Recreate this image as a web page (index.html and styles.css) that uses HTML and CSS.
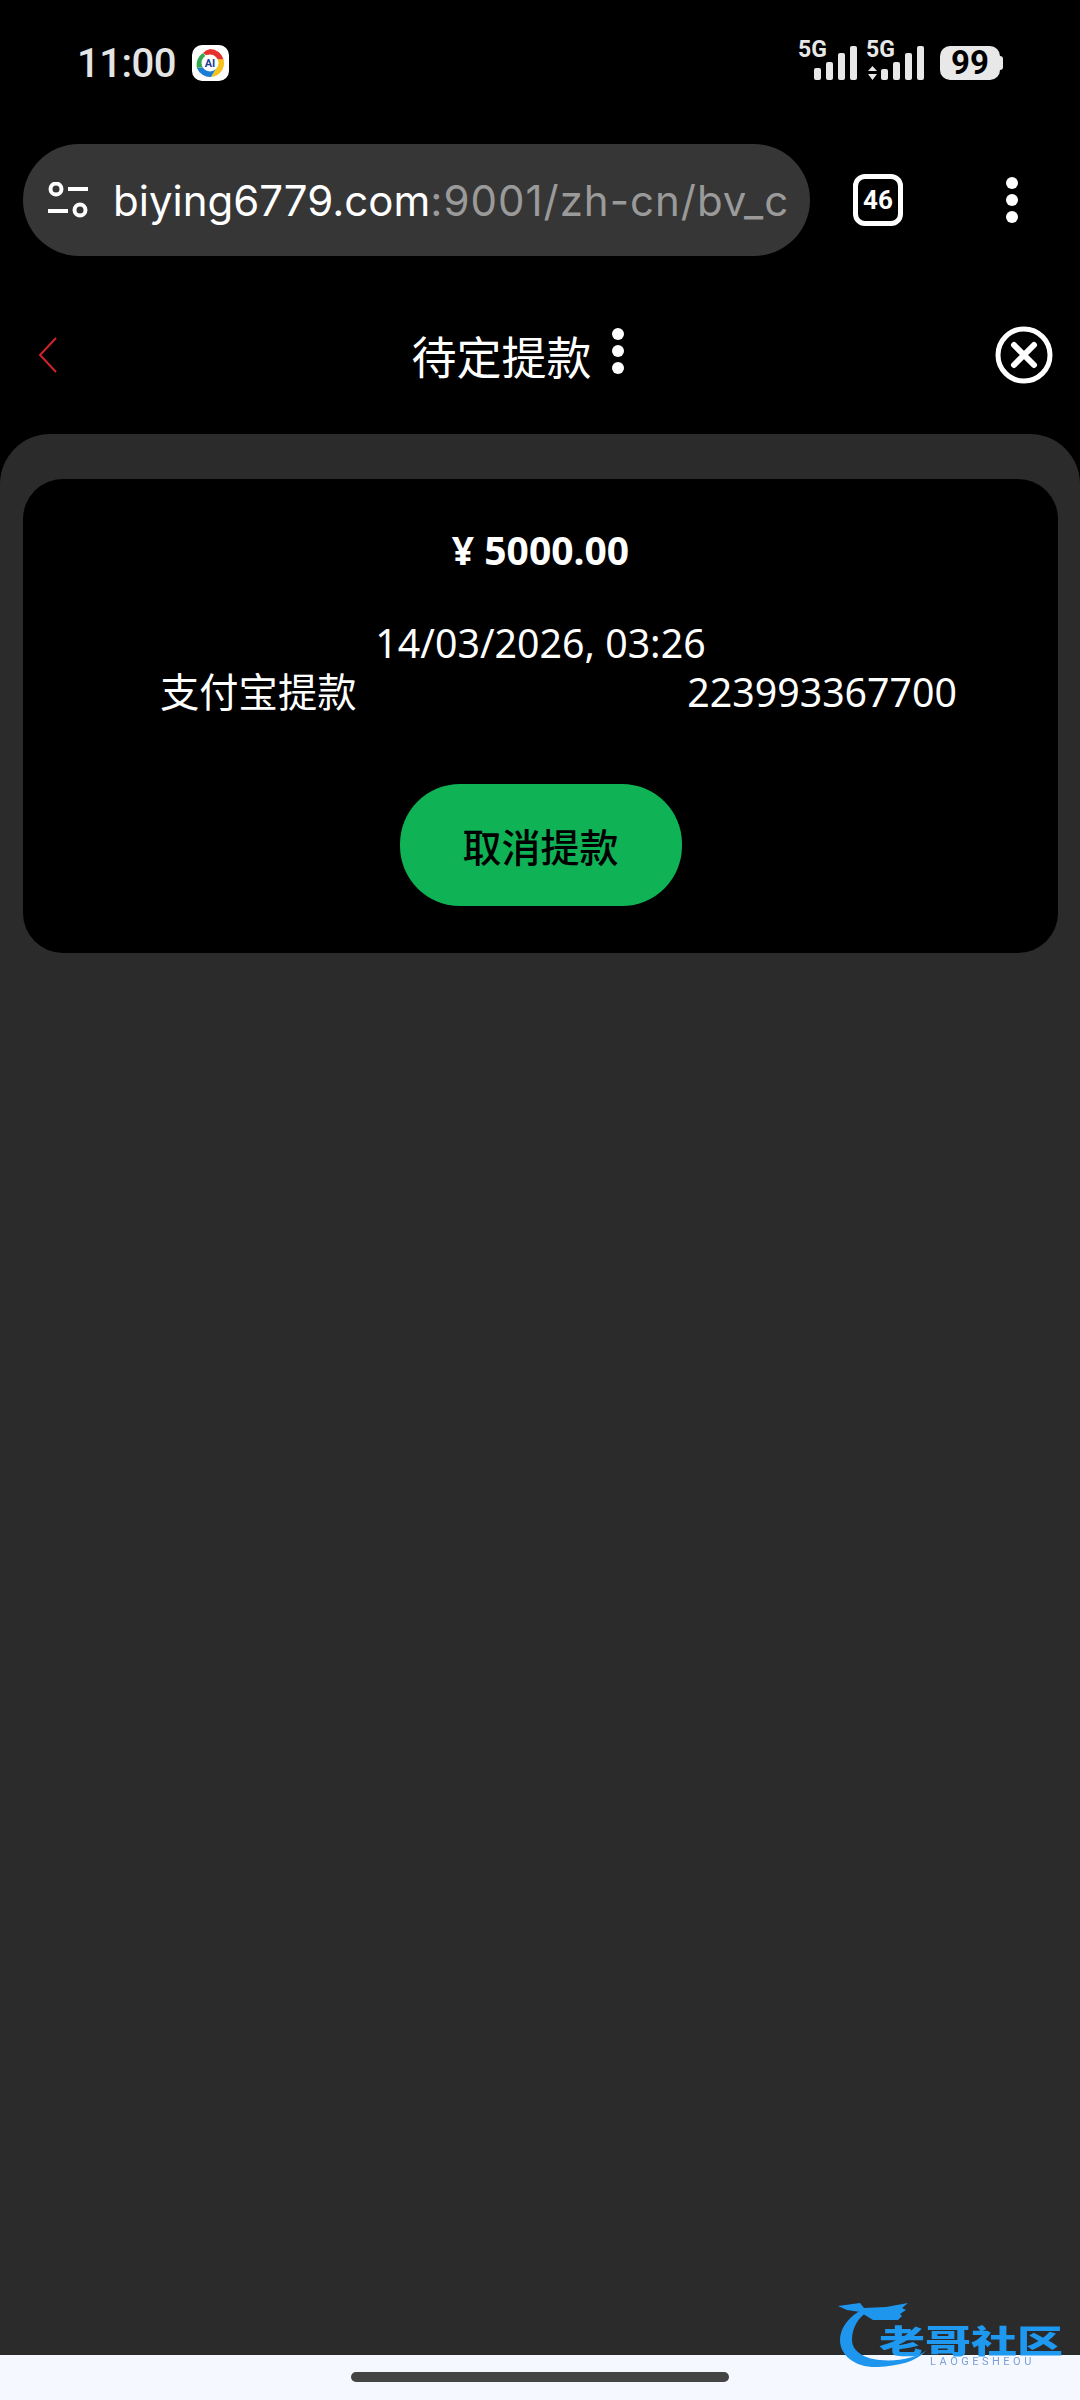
FILE: index.html
```html
<!DOCTYPE html>
<html lang="zh-CN">

<head>
    <meta charset="UTF-8">
    <meta name="viewport" content="width=device-width, initial-scale=1.0">
    <title>待定提款</title>
    <link rel="stylesheet" href="styles.css">
</head>

<body>
    <!-- Phone status bar -->
    <header class="status-bar">
        <div class="status-left">
            <span class="status-time">11:00</span>
            <span class="app-badge">
                <svg width="30" height="30" viewBox="0 0 30 30">
                    <path d="M15 1a14 14 0 0 1 13.6 10.6L18 12 8 5A14 14 0 0 1 15 1z" fill="#e5322d" />
                    <path d="M28.6 11.6A14 14 0 0 1 16 29l6-10-2-8z" fill="#f7c31c" />
                    <path d="M16 29A14 14 0 0 1 2 20l8-1a9 9 0 0 0 12 0z" fill="#1a7fd4" />
                    <path d="M2 20A14 14 0 0 1 8 5l4 5a8 8 0 0 0-4 9z" fill="#2faa4d" />
                    <circle cx="15" cy="15" r="8.5" fill="#fff" />
                    <text x="15" y="19" class="badge-text">AI</text>
                </svg>
            </span>
        </div>
        <div class="status-right">
            <svg class="signal" width="134" height="46" viewBox="0 -6 134 46">
                <text x="0" y="17" class="signal-text">5G</text>
                <rect x="16" y="28" width="7" height="12" rx="2" />
                <rect x="28" y="22" width="7" height="18" rx="2" />
                <rect x="40" y="13" width="7" height="27" rx="2" />
                <rect x="52" y="6" width="7" height="34" rx="2" />
                <text x="68" y="17" class="signal-text">5G</text>
                <path d="M74.500 26l4.500 5h-9zM74.500 40l4.500-6h-9z" />
                <rect x="83" y="29" width="7" height="11" rx="2" />
                <rect x="95" y="22" width="7" height="18" rx="2" />
                <rect x="107" y="13" width="7" height="27" rx="2" />
                <rect x="119" y="6" width="7" height="34" rx="2" />
            </svg>
            <span class="battery">99</span>
        </div>
    </header>

    <!-- Browser toolbar -->
    <div class="browser-bar">
        <div class="url-box">
            <svg class="url-icon" width="42" height="36" viewBox="0 0 42 36" fill="none" stroke="#fff" stroke-width="4">
                <circle cx="9" cy="7" r="5.500" />
                <path d="M21 7h20" />
                <path d="M1 29h20" />
                <circle cx="33" cy="28" r="5.500" />
            </svg>
            <div class="url-text">biying6779.com<span class="url-rest">:9001/zh-cn/bv_c</span></div>
        </div>
        <span class="tab-count">46</span>
        <span class="menu-dots">
            <i></i><i></i><i></i>
        </span>
    </div>

    <!-- Page title -->
    <nav class="page-nav">
        <svg class="back-icon" width="20" height="36" viewBox="0 0 20 36" fill="none" stroke="#d3232a" stroke-width="2">
            <path d="M18 1L2 18l16 17" />
        </svg>
        <div class="page-title">
            <span>待定提款</span>
            <span class="title-dots">
                <i></i><i></i><i></i>
            </span>
        </div>
        <svg class="close-icon" width="58" height="58" viewBox="0 0 58 58" fill="none" stroke="#fff">
            <circle cx="29" cy="29" r="26" stroke-width="5" />
            <path d="M19 19l20 20M39 19L19 39" stroke-width="6" stroke-linecap="round" />
        </svg>
    </nav>

    <main class="sheet">
        <section class="withdraw-card">
            <div class="amount">¥ 5000.00</div>
            <div class="date">14/03/2026, 03:26</div>
            <div class="detail-row">
                <span>支付宝提款</span>
                <span>223993367700</span>
            </div>
            <button class="cancel-btn">取消提款</button>
        </section>
    </main>

    <footer class="gesture-bar">
        <span class="home-pill"></span>
    </footer>

    <!-- Watermark sits over sheet and gesture bar -->
    <div class="watermark">
        <svg class="dragon" width="120" height="70" viewBox="0 0 120 70" fill="#1f96ee">
            <path d="M20 10C8 18 2 28 2 38c0 16 16 28 38 27 20-1 38-5 49-17-9 7-29 12-47 10C28 57 14 50 14 38c0-12 6-22 15-28z" />
            <path d="M0 4l22-3 4 5 22-1 22-4-6 5 4 2-6 4 2 2-4 4H35L22 10 9 8z" />
        </svg>
        <div class="logo-name">老哥社区</div>
        <div class="logo-sub">LAOGESHEOU</div>
    </div>
</body>

</html>
```

FILE: styles.css
```css
/* General Styles */
* {
    box-sizing: border-box;
}

html,
body {
    margin: 0;
    padding: 0;
}

body {
    position: relative;
    display: flex;
    flex-direction: column;
    width: 1080px;
    height: 2400px;
    overflow: hidden;
    background: #000;
    color: #fff;
    font-family: "Noto Sans", "Noto Sans CJK SC", sans-serif;
}

/* Status bar */
.status-bar {
    display: flex;
    justify-content: space-between;
    align-items: center;
    height: 126px;
    padding: 0 77px 0 77px;
    flex-shrink: 0;
}

.status-left {
    display: flex;
    align-items: center;
    gap: 16px;
}

.status-time {
    font-family: Roboto, sans-serif;
    font-size: 40px;
    font-weight: 500;
    letter-spacing: -0.500px;
    color: #e4e4e4;
}

.app-badge {
    display: flex;
    align-items: center;
    justify-content: center;
    width: 37px;
    height: 36px;
    background: #fff;
    border-radius: 10px;
}

.badge-text {
    font-family: Roboto, sans-serif;
    font-size: 11px;
    font-weight: 700;
    fill: #1b3f94;
    text-anchor: middle;
}

.status-right {
    display: flex;
    align-items: center;
    gap: 8px;
}

.signal {
    margin-bottom: 12px;
    fill: #e8e8e8;
}

.signal-text {
    font-family: Roboto, sans-serif;
    font-size: 23px;
    font-weight: 700;
}

.battery {
    position: relative;
    width: 60px;
    height: 34px;
    line-height: 34px;
    margin-right: 3px;
    background: #e8e8e8;
    border-radius: 10px;
    color: #000;
    font-family: Roboto, sans-serif;
    font-size: 33px;
    font-weight: 700;
    text-align: center;
}

.battery::after {
    content: "";
    position: absolute;
    top: 10px;
    right: -3px;
    width: 4px;
    height: 14px;
    background: #e8e8e8;
    border-radius: 0 3px 3px 0;
}

/* Browser toolbar */
.browser-bar {
    display: flex;
    align-items: center;
    height: 112px;
    margin-top: 18px;
    padding-left: 23px;
    flex-shrink: 0;
}

.url-box {
    display: flex;
    align-items: center;
    gap: 24px;
    width: 787px;
    height: 112px;
    padding: 0 23px 0 24px;
    background: #363636;
    border-radius: 56px;
}

.url-icon {
    flex-shrink: 0;
}

.url-text {
    white-space: nowrap;
    font-family: Inter, sans-serif;
    font-size: 42px;
    color: #fff;
}

.url-rest {
    color: #9a9a9a;
    letter-spacing: 1px;
}

.tab-count {
    width: 50px;
    height: 52px;
    line-height: 42px;
    margin-left: 43px;
    border: 5px solid #fff;
    border-radius: 12px;
    font-family: Roboto, sans-serif;
    font-size: 26px;
    font-weight: 700;
    text-align: center;
}

.menu-dots {
    display: flex;
    flex-direction: column;
    gap: 5px;
    margin-left: 103px;
}

.menu-dots i,
.title-dots i {
    display: block;
    width: 12px;
    height: 12px;
    background: #fff;
    border-radius: 50%;
}

/* Page title */
.page-nav {
    display: flex;
    align-items: center;
    justify-content: space-between;
    height: 178px;
    padding: 20px 27px 0 38px;
    flex-shrink: 0;
}

.page-title {
    display: flex;
    align-items: center;
    gap: 20px;
    margin-right: 18px;
    font-size: 45px;
}

.title-dots {
    display: flex;
    flex-direction: column;
    gap: 5px;
    margin-bottom: 8px;
}

/* Sheet */
.sheet {
    flex: 1;
    padding: 45px 22px 0 23px;
    background: #2b2b2b;
    border-radius: 50px 50px 0 0;
}

.withdraw-card {
    display: flex;
    flex-direction: column;
    align-items: center;
    height: 474px;
    padding-top: 45px;
    background: #000;
    border-radius: 40px;
}

.amount {
    font-size: 39px;
    font-weight: 700;
    line-height: 52px;
}

.date {
    margin-top: 43px;
    font-size: 39.300px;
    line-height: 49px;
}

.detail-row {
    display: flex;
    justify-content: space-between;
    width: 100%;
    padding: 0 101px 0 137px;
    font-size: 39.300px;
    line-height: 49px;
}

.cancel-btn {
    width: 282px;
    height: 122px;
    margin-top: 67px;
    background: #10b256;
    border: none;
    border-radius: 60px;
    color: #000;
    font-family: "Noto Sans CJK SC", sans-serif;
    font-size: 39px;
    font-weight: 500;
}

/* Gesture bar */
.gesture-bar {
    display: flex;
    justify-content: center;
    height: 45px;
    padding-top: 17px;
    background: #f6f8ff;
    flex-shrink: 0;
}

.home-pill {
    width: 378px;
    height: 10px;
    background: #444;
    border-radius: 5px;
}

/* Watermark */
.watermark {
    position: absolute;
    left: 838px;
    top: 2302px;
    width: 225px;
    height: 70px;
    filter: blur(0.6px);
}

.dragon {
    position: absolute;
    left: 0;
    top: 0;
}

.logo-name {
    position: absolute;
    left: 41px;
    top: 21px;
    font-family: "Noto Sans CJK SC", sans-serif;
    font-size: 46px;
    font-weight: 900;
    line-height: 32px;
    white-space: nowrap;
    color: #1f98f0;
    transform: scaleY(0.7);
}

.logo-sub {
    position: absolute;
    left: 92px;
    top: 55px;
    font-family: Roboto, sans-serif;
    font-size: 11px;
    line-height: 10px;
    letter-spacing: 3.500px;
    white-space: nowrap;
    color: #7aa2d8;
}
```
